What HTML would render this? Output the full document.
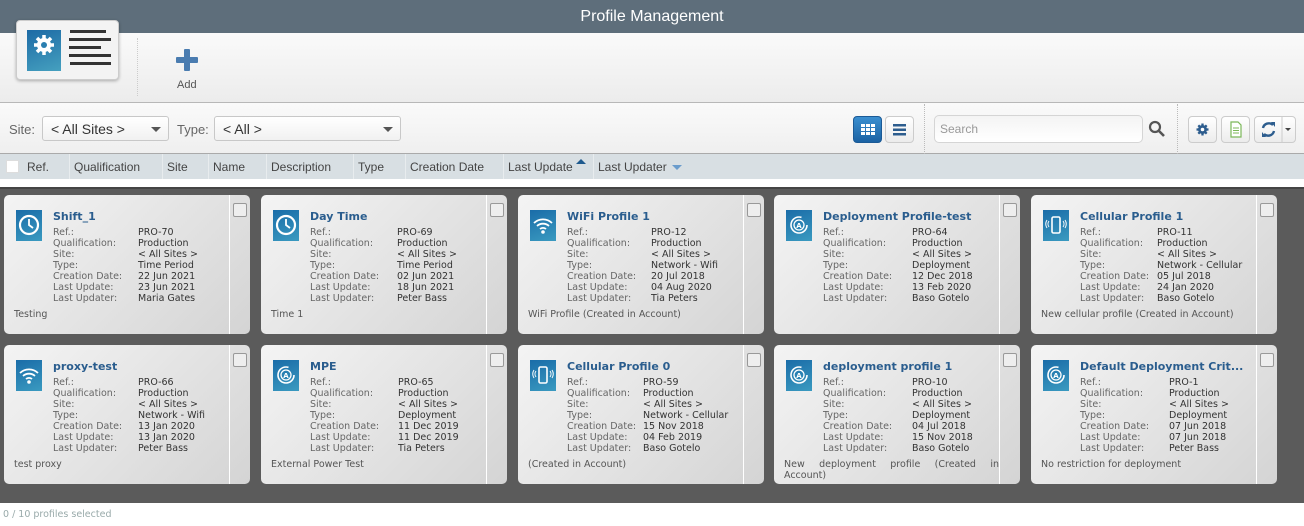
<!DOCTYPE html>
<html><head><meta charset="utf-8"><style>
*{box-sizing:border-box;margin:0;padding:0}
body{width:1304px;height:526px;overflow:hidden;background:#fff;font-family:"Liberation Sans",sans-serif;position:relative}
.abs{position:absolute}
.title{left:0;top:0;width:1304px;height:33px;background:#5e6e7b;color:#fff;font-size:16px;text-align:center;line-height:33px}
.tb{left:0;top:33px;width:1304px;height:70px;background:linear-gradient(#fafafa,#ececec);border-bottom:1px solid #b8b8b8}
.fb{left:0;top:103px;width:1304px;height:51px;background:linear-gradient(#fafafa,#efefef);border-bottom:1px solid #aaa}
.hdr{left:0;top:154px;width:1304px;height:25px;background:#d8dfe3;font-size:12px;color:#444}
.hdr span{position:absolute;top:6px}
.hdr i{position:absolute;top:0;width:1px;height:25px;background:#e8ecee}
.dark{left:0;top:187px;width:1304px;height:316px;background:#5b5b5b;border-top:2px solid #444}
.sel{height:25px;border:1px solid #c8c8c8;border-radius:3px;background:linear-gradient(#fff,#f1f1f1);font-size:14px;color:#333;padding:4px 8px}
.btn{width:29px;height:27px;border:1px solid #ccc;border-radius:4px;background:linear-gradient(#fff,#ececec)}
.card{position:absolute;width:246px;height:139px;border-radius:5px;background:linear-gradient(135deg,#f4f4f4,#d4d4d4);font-family:"DejaVu Sans",sans-serif;font-size:9.5px;color:#333;overflow:hidden}
.card .sep{position:absolute;left:225px;top:0;width:1px;height:139px;background:#fff}
.card .cb{position:absolute;left:229px;top:8px;width:14px;height:14px;border:1px solid #999;border-radius:2px;background:#eee}
.card .ic{position:absolute;left:12px;top:15px;width:26px;height:31px;background:linear-gradient(160deg,#1a6ca8,#3a9ac0)}
.card .ic svg{position:absolute;left:0;top:2px}
.card .t{position:absolute;left:49px;top:15px;font-weight:bold;font-size:11px;color:#2a5d8e;white-space:nowrap}
.card .l{position:absolute;left:49px;top:32px;line-height:11px;color:#666}
.card .v{position:absolute;left:134px;top:32px;line-height:11px;color:#333;white-space:nowrap}
.card .d{position:absolute;left:10px;top:114px;width:215px;line-height:11px;color:#555;text-align:justify}
</style></head><body>
<div class="abs title">Profile Management</div>
<div class="abs tb"></div>
<div class="abs" style="left:16px;top:20px;width:103px;height:60px;background:#f3f3f3;border:1px solid #ccc;border-radius:4px;box-shadow:0 1px 3px rgba(0,0,0,.3)">
 <div class="abs" style="left:10px;top:9px;width:34px;height:41px;background:linear-gradient(160deg,#1d6aa5,#45a0bf)">
  <svg width="34" height="41" viewBox="0 0 34 41"><g transform="translate(17,15)" fill="#fff"><circle r="7"/><g stroke="#fff" stroke-width="3.5"><line x1="0" y1="-10" x2="0" y2="10"/><line x1="-10" y1="0" x2="10" y2="0"/><line x1="-7" y1="-7" x2="7" y2="7"/><line x1="-7" y1="7" x2="7" y2="-7"/></g><circle r="3" fill="#2a7fb0"/></g></svg>
 </div>
 <div class="abs" style="left:52px;top:9px;width:42px;height:41px">
  <div class="abs" style="left:1px;top:0;width:36px;height:3px;background:#333"></div>
  <div class="abs" style="left:0;top:8px;width:42px;height:3px;background:#333"></div>
  <div class="abs" style="left:0;top:16px;width:32px;height:3px;background:#333"></div>
  <div class="abs" style="left:0;top:24px;width:42px;height:3px;background:#333"></div>
  <div class="abs" style="left:1px;top:32px;width:41px;height:3px;background:#333"></div>
 </div>
</div>
<div class="abs" style="left:137px;top:38px;width:1px;height:58px;border-left:1px dotted #ccc"></div>
<svg class="abs" style="left:176px;top:49px" width="22" height="22"><rect x="8" y="0" width="6" height="22" rx="1" fill="#4a7cb0"/><rect x="0" y="8" width="22" height="6" rx="1" fill="#4a7cb0"/></svg>
<div class="abs" style="left:177px;top:79px;font-size:11px;color:#555">Add</div>

<div class="abs fb"></div>
<div class="abs" style="left:9px;top:122px;font-size:13px;color:#666">Site:</div>
<div class="abs sel" style="left:42px;top:116px;width:127px">&lt; All Sites &gt;<span class="abs" style="right:7px;top:10px;border:5px solid transparent;border-top-color:#555"></span></div>
<div class="abs" style="left:177px;top:122px;font-size:13px;color:#666">Type:</div>
<div class="abs sel" style="left:214px;top:116px;width:187px">&lt; All &gt;<span class="abs" style="right:7px;top:10px;border:5px solid transparent;border-top-color:#555"></span></div>
<div class="abs btn" style="left:853px;top:116px;background:linear-gradient(#3b8fd0,#1b62a3);border-color:#1b5a96"><svg width="27" height="25"><g fill="#fff"><rect x="7" y="7" width="4" height="3"/><rect x="12" y="7" width="4" height="3"/><rect x="17" y="7" width="4" height="3"/><rect x="7" y="11" width="4" height="3"/><rect x="12" y="11" width="4" height="3"/><rect x="17" y="11" width="4" height="3"/><rect x="7" y="15" width="4" height="3"/><rect x="12" y="15" width="4" height="3"/><rect x="17" y="15" width="4" height="3"/></g></svg></div>
<div class="abs btn" style="left:885px;top:116px"><svg width="27" height="25"><g fill="#2d5d8e"><rect x="7" y="7" width="13" height="2.5"/><rect x="7" y="11.5" width="13" height="2.5"/><rect x="7" y="16" width="13" height="2.5"/></g></svg></div>
<div class="abs" style="left:924px;top:104px;height:50px;border-left:1px dotted #bbb"></div>
<div class="abs" style="left:934px;top:115px;width:209px;height:28px;border:1px solid #d5d5d5;border-radius:5px;background:linear-gradient(#f4f4f4,#fff);font-size:12px;color:#999;padding:6px 5px">Search</div>
<svg class="abs" style="left:1148px;top:120px" width="18" height="18"><circle cx="7" cy="7" r="5" fill="none" stroke="#555" stroke-width="2.2"/><line x1="11" y1="11" x2="16" y2="16" stroke="#555" stroke-width="2.6"/></svg>
<div class="abs" style="left:1177px;top:104px;height:50px;border-left:1px dotted #bbb"></div>
<div class="abs btn" style="left:1188px;top:116px"><svg width="27" height="25"><g transform="translate(13.5,12.5)" fill="#2d5d8e"><circle r="4.5"/><g stroke="#2d5d8e" stroke-width="2.3"><line x1="0" y1="-6" x2="0" y2="6"/><line x1="-6" y1="0" x2="6" y2="0"/><line x1="-4.2" y1="-4.2" x2="4.2" y2="4.2"/><line x1="-4.2" y1="4.2" x2="4.2" y2="-4.2"/></g><circle r="1.8" fill="#fff"/></g></svg></div>
<div class="abs btn" style="left:1221px;top:116px"><svg width="27" height="25"><path d="M9 5h7l3 3v12H9z" fill="#fff" stroke="#7cb85a" stroke-width="1.2"/><g stroke="#7cb85a"><line x1="11" y1="11" x2="17" y2="11"/><line x1="11" y1="13.5" x2="17" y2="13.5"/><line x1="11" y1="16" x2="17" y2="16"/></g></svg></div>
<div class="abs btn" style="left:1254px;top:116px;width:42px"><svg width="40" height="25"><path d="M8 11a6 6 0 0 1 10-3" fill="none" stroke="#2d5d8e" stroke-width="2.4"/><path d="M19 14a6 6 0 0 1-10 3" fill="none" stroke="#2d5d8e" stroke-width="2.4"/><path d="M16 5l4 0 0 5z" fill="#2d5d8e"/><path d="M11 20l-4 0 0-5z" fill="#2d5d8e"/><line x1="27" y1="0" x2="27" y2="25" stroke="#ccc"/><path d="M30 11h6l-3 3z" fill="#444"/></svg></div>

<div class="abs hdr">
 <div class="abs" style="left:6px;top:6px;width:13px;height:13px;background:#fff;border:1px solid #ddd"></div>
 <span style="left:27px">Ref.</span><i style="left:69px"></i>
 <span style="left:74px">Qualification</span><i style="left:162px"></i>
 <span style="left:167px">Site</span><i style="left:208px"></i>
 <span style="left:213px">Name</span><i style="left:266px"></i>
 <span style="left:271px">Description</span><i style="left:353px"></i>
 <span style="left:358px">Type</span><i style="left:405px"></i>
 <span style="left:410px">Creation Date</span><i style="left:503px"></i>
 <span style="left:508px">Last Update</span><span style="left:576px;top:5px;border:5px solid transparent;border-bottom-color:#1e5a8e;border-top:0"></span><i style="left:593px"></i>
 <span style="left:598px">Last Updater</span><span style="left:672px;top:11px;border:5px solid transparent;border-top-color:#6a9ccc;border-bottom:0"></span>
</div>
<div class="abs" style="left:0;top:179px;width:1304px;height:8px;background:#fff"></div>
<div class="abs dark"></div>
<div class="abs" style="left:0;top:503px;width:1304px;height:23px;background:#fff;font-family:'DejaVu Sans',sans-serif;font-size:9.5px;color:#9aa;padding:6px 3px">0 / 10 profiles selected</div>

<svg width="0" height="0" style="position:absolute"><defs>
<g id="clock"><circle cx="13" cy="13" r="9" fill="none" stroke="#fff" stroke-width="2.2"/><path d="M13 7v6l4 3" fill="none" stroke="#fff" stroke-width="1.8"/></g>
<g id="wifi"><path d="M4 11a13 13 0 0 1 18 0M7 14a9 9 0 0 1 12 0M10 17a4.5 4.5 0 0 1 6 0" fill="none" stroke="#fff" stroke-width="1.8"/><circle cx="13" cy="20" r="1.8" fill="#fff"/></g>
<g id="dep"><circle cx="13" cy="13" r="8" fill="none" stroke="#fff" stroke-width="1.6" stroke-dasharray="40 10"/><circle cx="13" cy="13" r="5" fill="none" stroke="#fff" stroke-width="1.3"/><text x="13" y="16" font-size="7" font-weight="bold" fill="#fff" text-anchor="middle" font-family="DejaVu Sans">A</text></g>
<g id="cell"><rect x="9" y="5" width="8" height="16" rx="1.5" fill="none" stroke="#fff" stroke-width="1.6"/><path d="M6 9a5 5 0 0 0 0 6M4 8a7 7 0 0 0 0 8M20 9a5 5 0 0 1 0 6M22 8a7 7 0 0 1 0 8" fill="none" stroke="#fff" stroke-width="1"/></g>
</defs></svg>

<div class="card" style="left:4px;top:195px"><div class="sep"></div><div class="cb"></div><div class="ic"><svg width="26" height="26"><use href="#clock"/></svg></div><div class="t">Shift_1</div><div class="l">Ref.:<br>Qualification:<br>Site:<br>Type:<br>Creation Date:<br>Last Update:<br>Last Updater:</div><div class="v">PRO-70<br>Production<br>&lt; All Sites &gt;<br>Time Period<br>22 Jun 2021<br>23 Jun 2021<br>Maria Gates</div><div class="d">Testing</div></div>
<div class="card" style="left:261px;top:195px"><div class="sep"></div><div class="cb"></div><div class="ic"><svg width="26" height="26"><use href="#clock"/></svg></div><div class="t">Day Time</div><div class="l">Ref.:<br>Qualification:<br>Site:<br>Type:<br>Creation Date:<br>Last Update:<br>Last Updater:</div><div class="v" style="left:136px">PRO-69<br>Production<br>&lt; All Sites &gt;<br>Time Period<br>02 Jun 2021<br>18 Jun 2021<br>Peter Bass</div><div class="d">Time 1</div></div>
<div class="card" style="left:518px;top:195px"><div class="sep"></div><div class="cb"></div><div class="ic"><svg width="26" height="26"><use href="#wifi"/></svg></div><div class="t">WiFi Profile 1</div><div class="l">Ref.:<br>Qualification:<br>Site:<br>Type:<br>Creation Date:<br>Last Update:<br>Last Updater:</div><div class="v" style="left:133px">PRO-12<br>Production<br>&lt; All Sites &gt;<br>Network - Wifi<br>20 Jul 2018<br>04 Aug 2020<br>Tia Peters</div><div class="d">WiFi Profile (Created in Account)</div></div>
<div class="card" style="left:774px;top:195px"><div class="sep"></div><div class="cb"></div><div class="ic"><svg width="26" height="26"><use href="#dep"/></svg></div><div class="t">Deployment Profile-test</div><div class="l">Ref.:<br>Qualification:<br>Site:<br>Type:<br>Creation Date:<br>Last Update:<br>Last Updater:</div><div class="v" style="left:138px">PRO-64<br>Production<br>&lt; All Sites &gt;<br>Deployment<br>12 Dec 2018<br>13 Feb 2020<br>Baso Gotelo</div><div class="d"></div></div>
<div class="card" style="left:1031px;top:195px"><div class="sep"></div><div class="cb"></div><div class="ic"><svg width="26" height="26"><use href="#cell"/></svg></div><div class="t">Cellular Profile 1</div><div class="l">Ref.:<br>Qualification:<br>Site:<br>Type:<br>Creation Date:<br>Last Update:<br>Last Updater:</div><div class="v" style="left:126px">PRO-11<br>Production<br>&lt; All Sites &gt;<br>Network - Cellular<br>05 Jul 2018<br>24 Jan 2020<br>Baso Gotelo</div><div class="d" style="white-space:nowrap">New cellular profile (Created in Account)</div></div>

<div class="card" style="left:4px;top:345px"><div class="sep"></div><div class="cb"></div><div class="ic"><svg width="26" height="26"><use href="#wifi"/></svg></div><div class="t">proxy-test</div><div class="l">Ref.:<br>Qualification:<br>Site:<br>Type:<br>Creation Date:<br>Last Update:<br>Last Updater:</div><div class="v">PRO-66<br>Production<br>&lt; All Sites &gt;<br>Network - Wifi<br>13 Jan 2020<br>13 Jan 2020<br>Peter Bass</div><div class="d">test proxy</div></div>
<div class="card" style="left:261px;top:345px"><div class="sep"></div><div class="cb"></div><div class="ic"><svg width="26" height="26"><use href="#dep"/></svg></div><div class="t">MPE</div><div class="l">Ref.:<br>Qualification:<br>Site:<br>Type:<br>Creation Date:<br>Last Update:<br>Last Updater:</div><div class="v" style="left:137px">PRO-65<br>Production<br>&lt; All Sites &gt;<br>Deployment<br>11 Dec 2019<br>11 Dec 2019<br>Tia Peters</div><div class="d">External Power Test</div></div>
<div class="card" style="left:518px;top:345px"><div class="sep"></div><div class="cb"></div><div class="ic"><svg width="26" height="26"><use href="#cell"/></svg></div><div class="t">Cellular Profile 0</div><div class="l">Ref.:<br>Qualification:<br>Site:<br>Type:<br>Creation Date:<br>Last Update:<br>Last Updater:</div><div class="v" style="left:125px">PRO-59<br>Production<br>&lt; All Sites &gt;<br>Network - Cellular<br>15 Nov 2018<br>04 Feb 2019<br>Baso Gotelo</div><div class="d">(Created in Account)</div></div>
<div class="card" style="left:774px;top:345px"><div class="sep"></div><div class="cb"></div><div class="ic"><svg width="26" height="26"><use href="#dep"/></svg></div><div class="t">deployment profile 1</div><div class="l">Ref.:<br>Qualification:<br>Site:<br>Type:<br>Creation Date:<br>Last Update:<br>Last Updater:</div><div class="v" style="left:138px">PRO-10<br>Production<br>&lt; All Sites &gt;<br>Deployment<br>04 Jul 2018<br>15 Nov 2018<br>Baso Gotelo</div><div class="d">New&nbsp;&nbsp;&nbsp; deployment&nbsp;&nbsp;&nbsp; profile&nbsp;&nbsp;&nbsp; (Created&nbsp;&nbsp;&nbsp; in Account)</div></div>
<div class="card" style="left:1031px;top:345px"><div class="sep"></div><div class="cb"></div><div class="ic"><svg width="26" height="26"><use href="#dep"/></svg></div><div class="t">Default Deployment Crit...</div><div class="l">Ref.:<br>Qualification:<br>Site:<br>Type:<br>Creation Date:<br>Last Update:<br>Last Updater:</div><div class="v" style="left:138px">PRO-1<br>Production<br>&lt; All Sites &gt;<br>Deployment<br>07 Jun 2018<br>07 Jun 2018<br>Peter Bass</div><div class="d">No restriction for deployment</div></div>
</body></html>
